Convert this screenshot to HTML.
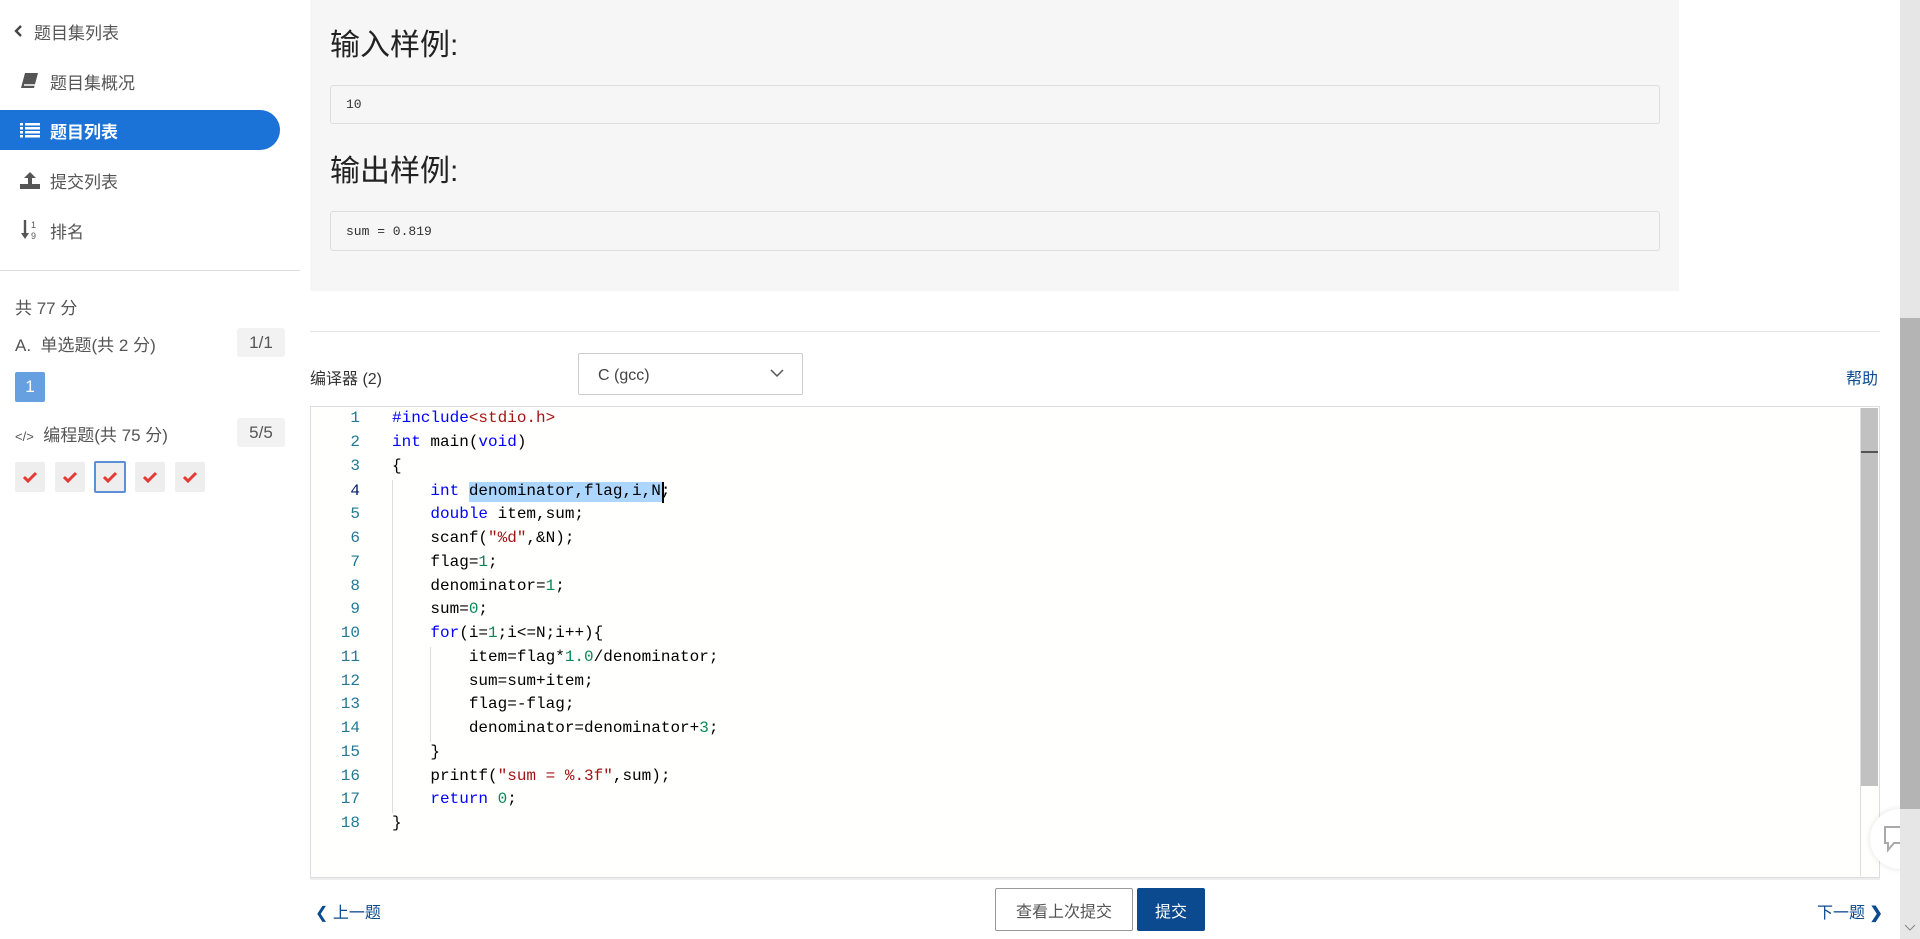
<!DOCTYPE html>
<html><head><meta charset="utf-8"><style>
*{margin:0;padding:0;box-sizing:border-box}
body{width:1920px;height:939px;overflow:hidden;background:#fff;font-family:"Liberation Sans","Noto Sans CJK SC",sans-serif;color:#333;position:relative}
.a{position:absolute}
.nav{font-size:17px;color:#555;display:flex;align-items:center}
.code{font-family:"Liberation Mono","Noto Sans CJK SC",monospace;font-size:16px;white-space:pre}
.ln{position:absolute;left:330px;width:30px;text-align:right;color:#237893;font-family:"Liberation Mono",monospace;font-size:16px}
.cl{position:absolute;left:392px;color:#000}
.k{color:#0000ff}.s{color:#a31515}.n{color:#098658}
.chk{position:absolute;top:462px;width:30px;height:30px;background:#eee;border-radius:2px;display:flex;align-items:center;justify-content:center}
.badge{position:absolute;left:237px;width:48px;height:29px;background:#f2f2f2;border-radius:3px;font-size:17px;color:#555;display:flex;align-items:center;justify-content:center}
</style></head><body>
<!-- sidebar -->
<div class="a nav" style="left:14px;top:19px;height:24px"><svg width="10" height="14" viewBox="0 0 10 14"><path d="M7 2L2 7l5 5" stroke="#444" stroke-width="2.4" fill="none"/></svg><span style="margin-left:10px">题目集列表</span></div>
<div class="a nav" style="left:20px;top:69px;height:24px"><svg width="20" height="18" viewBox="0 0 20 18"><path d="M5 1h13l-4 15H1z" fill="#555"/><path d="M4 13h11" stroke="#fff" stroke-width="1.5"/></svg><span style="margin-left:10px">题目集概况</span></div>
<div class="a" style="left:0;top:110px;width:280px;height:40px;background:#1b73d8;border-radius:0 20px 20px 0"></div>
<div class="a nav" style="left:20px;top:118px;height:24px;color:#fff;font-weight:bold"><svg width="20" height="16" viewBox="0 0 20 16"><g fill="#fff"><rect x="0" y="1" width="3" height="2.5"/><rect x="5" y="1" width="15" height="2.5"/><rect x="0" y="5" width="3" height="2.5"/><rect x="5" y="5" width="15" height="2.5"/><rect x="0" y="9" width="3" height="2.5"/><rect x="5" y="9" width="15" height="2.5"/><rect x="0" y="13" width="3" height="2.5"/><rect x="5" y="13" width="15" height="2.5"/></g></svg><span style="margin-left:10px">题目列表</span></div>
<div class="a nav" style="left:20px;top:168px;height:24px"><svg width="20" height="20" viewBox="0 0 20 20"><path d="M10 2l6 6h-4v6H8V8H4z" fill="#555"/><rect x="0" y="14" width="20" height="5" fill="#555"/></svg><span style="margin-left:10px">提交列表</span></div>
<div class="a nav" style="left:20px;top:218px;height:24px"><svg width="20" height="22" viewBox="0 0 20 22"><path d="M5 1v17" stroke="#555" stroke-width="2.4"/><path d="M1 14l4 6 4-6z" fill="#555"/><text x="11" y="9" font-size="9" fill="#555" font-family="Liberation Sans">1</text><text x="11" y="20" font-size="9" fill="#555" font-family="Liberation Sans">9</text></svg><span style="margin-left:10px">排名</span></div>
<div class="a" style="left:0;top:270px;width:300px;height:1px;background:#ddd"></div>
<div class="a" style="left:15px;top:294px;font-size:17px;color:#555">共 77 分</div>
<div class="a" style="left:15px;top:331px;font-size:17px;color:#555">A.&nbsp; 单选题(共 2 分)</div>
<div class="badge" style="top:328px">1/1</div>
<div class="a" style="left:15px;top:372px;width:30px;height:30px;background:#66a0e0;border-radius:2px;color:#fff;font-size:17px;display:flex;align-items:center;justify-content:center">1</div>
<div class="a" style="left:15px;top:421px;font-size:17px;color:#555"><span style="font-size:13px">&lt;/&gt;</span>&nbsp; 编程题(共 75 分)</div>
<div class="badge" style="top:418px">5/5</div>
<div class="chk" style="left:15px"><svg width="16" height="12"><path d="M2 6l4 4 8-8" stroke="#e53935" stroke-width="3" fill="none"/></svg></div>
<div class="chk" style="left:55px"><svg width="16" height="12"><path d="M2 6l4 4 8-8" stroke="#e53935" stroke-width="3" fill="none"/></svg></div>
<div class="chk" style="left:94px;top:461px;width:32px;height:32px;border:2px solid #5b8fd6"><svg width="16" height="12"><path d="M2 6l4 4 8-8" stroke="#e53935" stroke-width="3" fill="none"/></svg></div>
<div class="chk" style="left:135px"><svg width="16" height="12"><path d="M2 6l4 4 8-8" stroke="#e53935" stroke-width="3" fill="none"/></svg></div>
<div class="chk" style="left:175px"><svg width="16" height="12"><path d="M2 6l4 4 8-8" stroke="#e53935" stroke-width="3" fill="none"/></svg></div>
<!-- samples -->
<div class="a" style="left:310px;top:0;width:1369px;height:291px;background:#f6f6f6"></div>
<div class="a" style="left:330px;top:20px;font-size:30px;color:#222">输入样例:</div>
<div class="a code" style="left:330px;top:85px;width:1330px;height:39px;border:1px solid #ddd;border-radius:3px;background:#f6f6f6;font-size:13px;padding:11px 15px;color:#333">10</div>
<div class="a" style="left:330px;top:146px;font-size:30px;color:#222">输出样例:</div>
<div class="a code" style="left:330px;top:211px;width:1330px;height:40px;border:1px solid #ddd;border-radius:3px;background:#f6f6f6;font-size:13px;padding:12px 15px;color:#333">sum = 0.819</div>
<div class="a" style="left:310px;top:331px;width:1570px;height:1px;background:#e5e5e5"></div>
<div class="a" style="left:310px;top:365px;font-size:16px;color:#333">编译器 (2)</div>
<div class="a" style="left:578px;top:353px;width:225px;height:42px;border:1px solid #ccc;border-radius:2px;background:#fff;font-size:16px;color:#444;padding:13px 19px">C (gcc)<svg class="a" style="right:18px;top:15px" width="14" height="9"><path d="M1 1l6 6 6-6" stroke="#555" stroke-width="1.5" fill="none"/></svg></div>
<div class="a" style="left:1846px;top:365px;font-size:16px;color:#0b4a8f">帮助</div>
<!-- editor -->
<div class="a" style="left:310px;top:406px;width:1570px;height:472px;border:1px solid #ddd;background:#fffffe"></div>
<div class="a" style="left:469px;top:482px;width:193px;height:20px;background:#add6ff"></div>
<div class="a" style="left:662px;top:482px;width:2px;height:21px;background:#000"></div>
<div class="a" style="left:392px;top:480px;width:1px;height:333px;background:#ddd"></div>
<div class="a" style="left:430px;top:647px;width:1px;height:95px;background:#ddd"></div>
<div class="a" style="left:1860px;top:408px;width:18px;height:468px;border-left:1px solid #ddd"></div>
<div class="a" style="left:1861px;top:408px;width:17px;height:378px;background:#c1c1c1"></div>
<div class="a" style="left:1861px;top:451px;width:17px;height:2px;background:#555"></div>
<div class="code">
<div class="ln" style="top:409px">1</div><div class="cl" style="top:409px"><span class="k">#include</span><span class="s">&lt;stdio.h&gt;</span></div>
<div class="ln" style="top:433px">2</div><div class="cl" style="top:433px"><span class="k">int</span> main(<span class="k">void</span>)</div>
<div class="ln" style="top:457px">3</div><div class="cl" style="top:457px">{</div>
<div class="ln" style="top:482px;color:#0b216f">4</div><div class="cl" style="top:482px">    <span class="k">int</span> denominator,flag,i,N;</div>
<div class="ln" style="top:505px">5</div><div class="cl" style="top:505px">    <span class="k">double</span> item,sum;</div>
<div class="ln" style="top:529px">6</div><div class="cl" style="top:529px">    scanf(<span class="s">"%d"</span>,&amp;N);</div>
<div class="ln" style="top:553px">7</div><div class="cl" style="top:553px">    flag=<span class="n">1</span>;</div>
<div class="ln" style="top:577px">8</div><div class="cl" style="top:577px">    denominator=<span class="n">1</span>;</div>
<div class="ln" style="top:600px">9</div><div class="cl" style="top:600px">    sum=<span class="n">0</span>;</div>
<div class="ln" style="top:624px">10</div><div class="cl" style="top:624px">    <span class="k">for</span>(i=<span class="n">1</span>;i&lt;=N;i++){</div>
<div class="ln" style="top:648px">11</div><div class="cl" style="top:648px">        item=flag*<span class="n">1.0</span>/denominator;</div>
<div class="ln" style="top:672px">12</div><div class="cl" style="top:672px">        sum=sum+item;</div>
<div class="ln" style="top:695px">13</div><div class="cl" style="top:695px">        flag=-flag;</div>
<div class="ln" style="top:719px">14</div><div class="cl" style="top:719px">        denominator=denominator+<span class="n">3</span>;</div>
<div class="ln" style="top:743px">15</div><div class="cl" style="top:743px">    }</div>
<div class="ln" style="top:767px">16</div><div class="cl" style="top:767px">    printf(<span class="s">"sum = %.3f"</span>,sum);</div>
<div class="ln" style="top:790px">17</div><div class="cl" style="top:790px">    <span class="k">return</span> <span class="n">0</span>;</div>
<div class="ln" style="top:814px">18</div><div class="cl" style="top:814px">}</div>
</div>
<!-- bottom -->
<div class="a" style="left:310px;top:878px;width:1570px;height:2px;background:#eee"></div>
<div class="a" style="left:315px;top:899px;font-size:16px;color:#0b4a8f">❮ 上一题</div>
<div class="a" style="left:995px;top:888px;width:138px;height:43px;border:1px solid #999;border-radius:2px;font-size:16px;color:#555;display:flex;align-items:center;justify-content:center">查看上次提交</div>
<div class="a" style="left:1137px;top:888px;width:68px;height:43px;background:#0b4a8f;border-radius:2px;font-size:16px;color:#fff;display:flex;align-items:center;justify-content:center">提交</div>
<div class="a" style="left:1817px;top:899px;font-size:16px;color:#0b4a8f">下一题 <b>❯</b></div>
<!-- feedback bubble -->
<div class="a" style="left:1870px;top:809px;width:60px;height:60px;border-radius:50%;background:#fff;box-shadow:0 0 6px rgba(0,0,0,.12)"></div>
<svg class="a" style="left:1884px;top:826px" width="20" height="28"><path d="M1 1h18v16H10l-6 7v-7H1z" stroke="#aaa" stroke-width="2" fill="none"/></svg>
<!-- page scrollbar -->
<div class="a" style="left:1900px;top:0;width:20px;height:939px;background:#e6e6e6"></div>
<div class="a" style="left:1900px;top:318px;width:20px;height:491px;background:#b4b4b4"></div>
<svg class="a" style="left:1904px;top:924px" width="12" height="8"><path d="M1 1l5 5 5-5" stroke="#888" fill="none"/></svg>
</body></html>
